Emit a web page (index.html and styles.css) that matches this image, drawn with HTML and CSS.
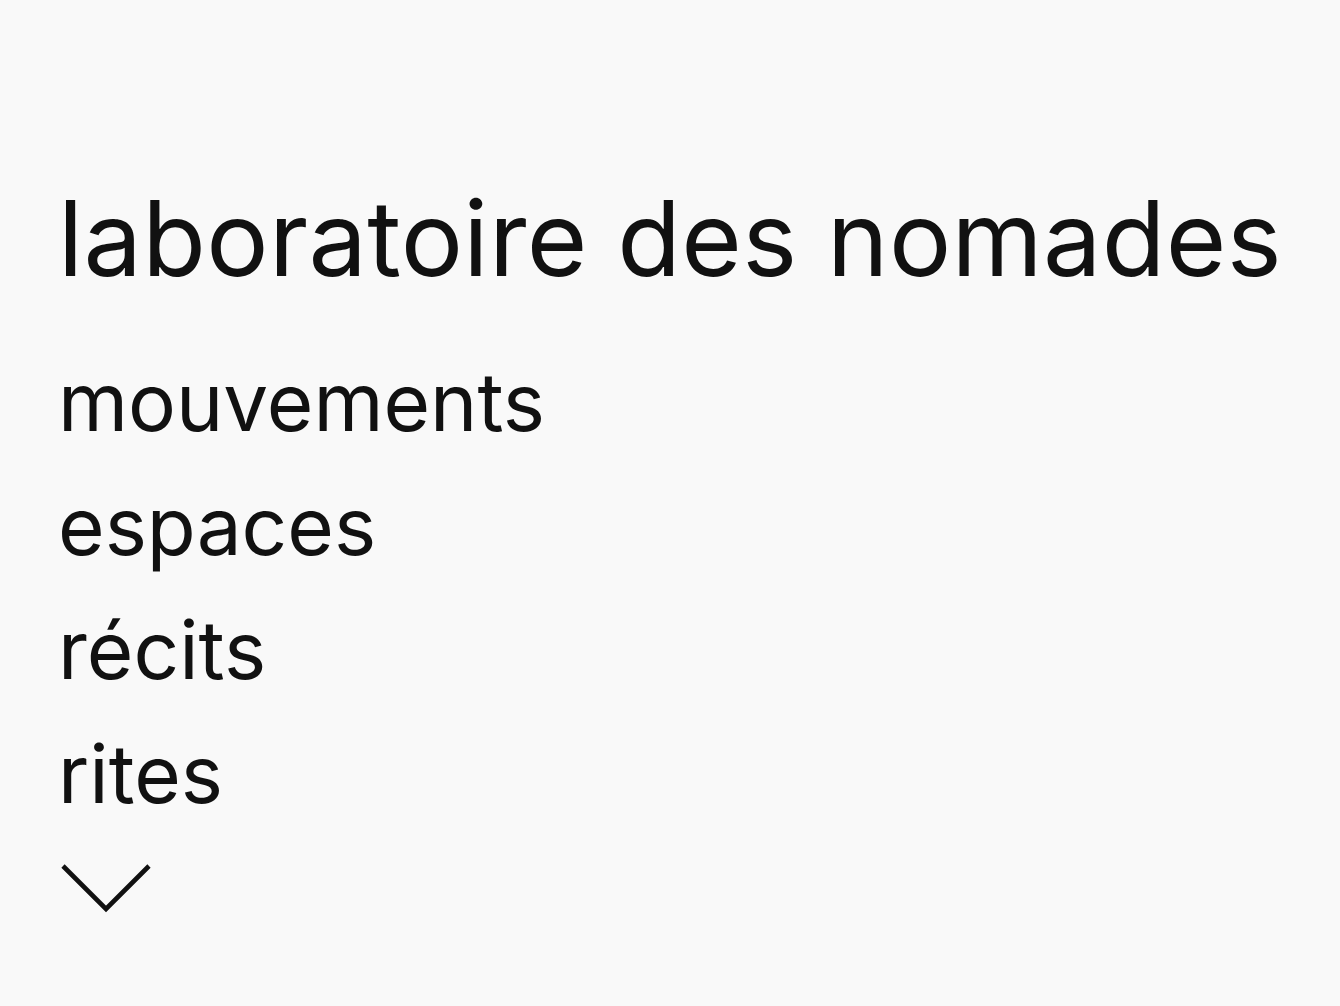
FILE: index.html
```html
<!DOCTYPE html>
<html>
  <head>
    <title>laboratoire des nomades</title>
    <meta charset="utf-8" />
    <link rel="stylesheet" href="styles.css">
  </head>
  <body>
    <div class="page">
      <h1 class="title">laboratoire des nomades</h1>
      <ul class="menu">
        <li><a href="#">mouvements</a></li>
        <li><a href="#">espaces</a></li>
        <li><a href="#">récits</a></li>
        <li><a href="#">rites</a></li>
      </ul>
      <a class="more" href="#">
        <svg width="92" height="52" viewBox="0 0 92 52">
          <polyline points="3,3 46,46 89,3" fill="none" stroke="#111" stroke-width="4.6"/>
        </svg>
      </a>
    </div>
  </body>
</html>
```

FILE: styles.css
```css
*{
    margin:0;
    padding:0;
}
html,body{
    background:#f9f9f9;
}
body{
    font-family:Inter,"Liberation Sans",sans-serif;
    color:#111;
}
.page{
    padding:176px 0 0 58px;
    display:flex;
    flex-direction:column;
    align-items:flex-start;
}
.title{
    font-size:104px;
    font-weight:400;
    line-height:124px;
    letter-spacing:0.35px;
}
.menu{
    list-style:none;
    margin-top:40px;
}
.menu li{
    font-size:80px;
    line-height:124px;
}
.menu a{
    color:#111;
    text-decoration:none;
}
.more{
    display:block;
    margin-top:27px;
    margin-left:2px;
}
.more svg{
    display:block;
}
```
